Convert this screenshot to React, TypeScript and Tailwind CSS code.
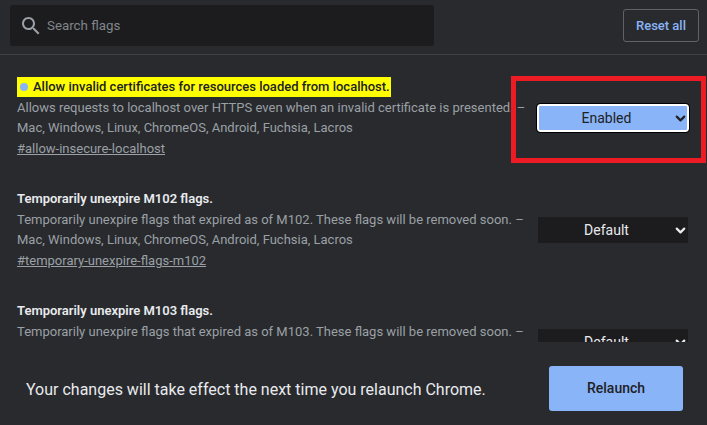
import { ChevronDown } from 'lucide-react';

interface FlagProps {
  title: string;
  description: string;
  link: string;
  value: string;
  active?: boolean;
}

const Flag = ({ title, description, link, value, active }: FlagProps) => {
  return (
    <div className="flex h-[112px] items-start">
      <div className="w-[503px] shrink-0">
        <div className="flex h-5 items-center">
          {active ? (
            <div className="flex h-5 items-center bg-[#ffff00] pr-px text-[13px] font-medium whitespace-nowrap text-[#202124]">
              <span className="mr-[5px] ml-[3px] h-2 w-2 rounded-full bg-[#8ab4f8]"></span>
              {title}
            </div>
          ) : (
            <div className="text-[13px] font-semibold text-[#e8eaed]">{title}</div>
          )}
        </div>
        <p className="mt-[1px] text-[13px] leading-5 whitespace-nowrap text-[#9aa0a6]">
          {description} –<br />
          Mac, Windows, Linux, ChromeOS, Android, Fuchsia, Lacros
        </p>
        <a className="mt-[1px] block text-[13px] leading-5 text-[#9aa0a6] underline">
          #{link}
        </a>
      </div>
      <div className="pt-[27px] pl-[17px]">
        {active ? (
          <div className="relative flex h-7 w-[152px] items-center justify-center rounded-[3px] border-2 border-white bg-[#8ab4f8] text-[14px] text-[#202124] outline outline-1 outline-black">
            <span className="mr-[13px]">{value}</span>
            <ChevronDown className="absolute right-[-1px] h-[15px] w-[15px] text-[#202124]" strokeWidth={3.5} />
          </div>
        ) : (
          <div className="relative mt-px ml-px flex h-[26px] w-[150px] items-center justify-center bg-[#1c1c1e] text-[14px] text-[#e8eaed]">
            <span className="mr-[13px]">{value}</span>
            <ChevronDown className="absolute right-0 h-[15px] w-[15px] text-[#e8eaed]" strokeWidth={3.5} />
          </div>
        )}
      </div>
    </div>
  );
};

export default function App() {
  return (
    <div className="relative flex h-[425px] w-[707px] flex-col overflow-hidden bg-[#292a2d] font-['Roboto',sans-serif]">
      <header className="flex h-[55px] shrink-0 items-start border-b border-[#3f4043] pt-[5px] pr-[8px] pl-[10px]">
        <div className="flex h-[41px] w-[424px] items-center rounded-[3px] bg-[#1c1c1e] pl-[9px]">
          <svg viewBox="0 0 24 24" className="h-6 w-6 fill-[#9aa0a6]">
            <path d="M15.5 14h-.79l-.28-.27C15.41 12.59 16 11.11 16 9.5 16 5.91 13.09 3 9.5 3S3 5.91 3 9.5 5.91 16 9.5 16c1.61 0 3.09-.59 4.23-1.57l.27.28v.79l5 4.99L20.49 19l-4.99-5zm-6 0C7.01 14 5 11.99 5 9.5S7.01 5 9.5 5 14 7.01 14 9.5 11.99 14 9.5 14z" />
          </svg>
          <span className="ml-[4px] text-[13.33px] text-[#80868b]">Search flags</span>
        </div>
        <button className="mt-[4px] ml-auto flex h-[33px] w-[76px] items-center justify-center rounded-[3px] border border-[#5f6368] text-[13px] font-medium text-[#8ab4f8]">
          Reset all
        </button>
      </header>
      <main className="min-h-0 flex-1 overflow-hidden pt-[22px] pl-[17px]">
        <Flag
          active
          title="Allow invalid certificates for resources loaded from localhost."
          description="Allows requests to localhost over HTTPS even when an invalid certificate is presented."
          link="allow-insecure-localhost"
          value="Enabled"
        />
        <Flag
          title="Temporarily unexpire M102 flags."
          description="Temporarily unexpire flags that expired as of M102. These flags will be removed soon."
          link="temporary-unexpire-flags-m102"
          value="Default"
        />
        <Flag
          title="Temporarily unexpire M103 flags."
          description="Temporarily unexpire flags that expired as of M103. These flags will be removed soon."
          link="temporary-unexpire-flags-m103"
          value="Default"
        />
      </main>
      <footer className="flex h-[83px] shrink-0 items-start bg-[#292a2d] pt-[24px] pr-[24px] pl-[26px]">
        <span className="mt-[12px] text-[16px] text-[#e8eaed]">
          Your changes will take effect the next time you relaunch Chrome.
        </span>
        <button className="ml-auto h-[45px] w-[134px] rounded-[3px] bg-[#8ab4f8] text-[14px] font-medium text-[#202124]">
          Relaunch
        </button>
      </footer>
      <div className="absolute top-[76px] left-[511px] h-[87px] w-[195px] border-[5px] border-[#ed1c24]"></div>
    </div>
  );
}
